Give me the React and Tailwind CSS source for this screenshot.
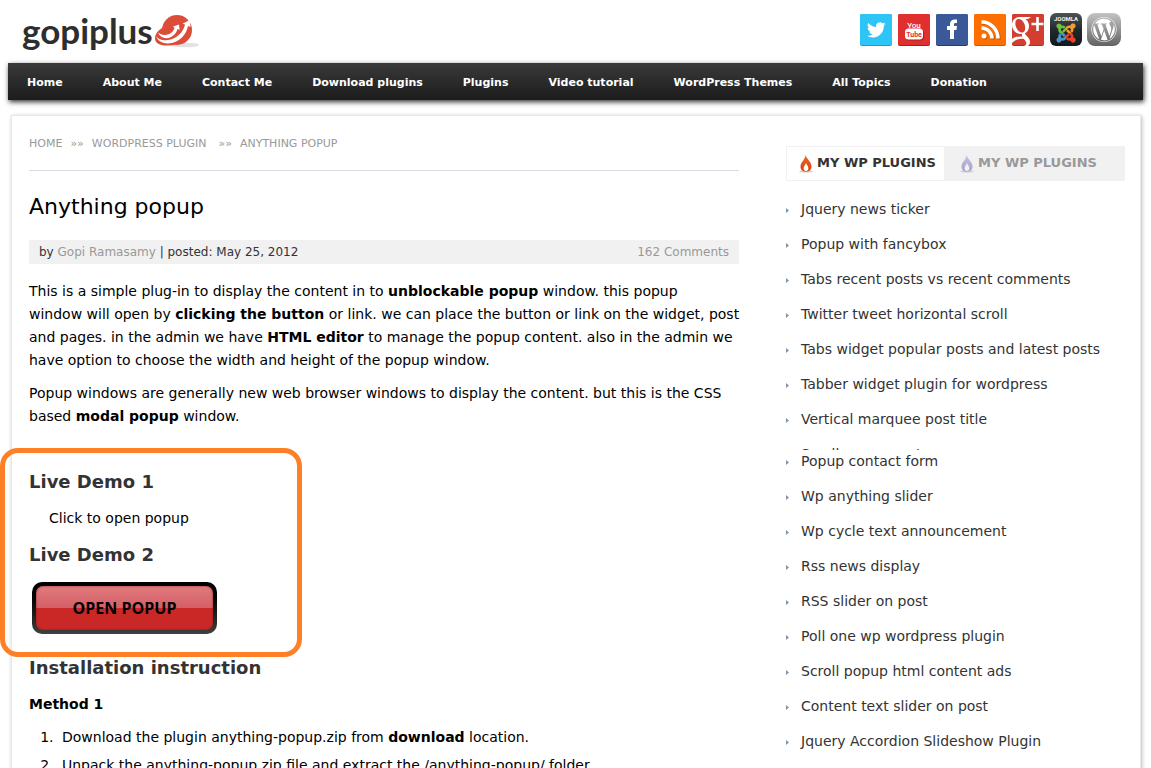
import { FaJoomla, FaWordpress } from "react-icons/fa";

const nav = ["Home", "About Me", "Contact Me", "Download plugins", "Plugins", "Video tutorial", "WordPress Themes", "All Topics", "Donation"];

const pluginsTop = [
  "Jquery news ticker",
  "Popup with fancybox",
  "Tabs recent posts vs recent comments",
  "Twitter tweet horizontal scroll",
  "Tabs widget popular posts and latest posts",
  "Tabber widget plugin for wordpress",
  "Vertical marquee post title",
];

const pluginsBottom = [
  "Popup contact form",
  "Wp anything slider",
  "Wp cycle text announcement",
  "Rss news display",
  "RSS slider on post",
  "Poll one wp wordpress plugin",
  "Scroll popup html content ads",
  "Content text slider on post",
  "Jquery Accordion Slideshow Plugin",
];

function LogoMark() {
  return (
    <svg className="ml-px" width="46" height="38" viewBox="0 0 46 38" aria-hidden="true">
      <ellipse cx="31" cy="33" rx="14" ry="2.3" fill="#e2e2e2" />
      <circle cx="23" cy="18" r="15" fill="#dd4b39" />
      <path d="M8 16C3 19 1 23 1 26.500c0 4.500 5 7 11 7 4 0 8-.5 11-1.500L28 22 14 12Z" fill="#dd4b39" />
      <path d="M4 20.500C6 25.500 11 27.300 16 25.500c4-1.700 6.500-4.500 7.500-8.500l2.200.8-.8-5.300-6.200 2.300 2 .9c-1 3-3 5.300-6.200 6.500C11 23.400 7 23.200 4 20.500Z" fill="#fff" />
      <path d="M2 24C4 30 10.500 32.600 18 31c8-2 14.500-8.500 16-17l2.500.9-.7-6.900-7.300 3.700 2.500.8C29.500 19 24.500 25 17.500 27.300 11 29.300 5 28.500 2 24Z" fill="#fff" />
    </svg>
  );
}

function Social({ label, children }) {
  return (
    <a href="#" aria-label={label} className="block h-[34px] w-[34px]">
      <svg width="34" height="34" viewBox="0 0 34 34">{children}</svg>
    </a>
  );
}

function Tile({ color, edge }) {
  return (
    <>
      <rect x="1" y="2" width="32" height="32" rx="2" fill={edge} />
      <rect x="1" y="2" width="32" height="31" rx="2" fill={color} />
    </>
  );
}

function Flame({ top, bottom, inner, id }) {
  return (
    <svg width="14" height="18" viewBox="0 0 14 18" aria-hidden="true">
      <linearGradient id={id} x1="0" y1="0" x2="0" y2="1"><stop offset="0" stopColor={top} /><stop offset="1" stopColor={bottom} /></linearGradient>
      <ellipse cx="7" cy="16.400" rx="6.800" ry="1.200" fill="#cfcfcf" />
      <path d="M6.500 0C7.500 4 12.500 6.500 12.500 11.500C12.500 14.500 10.500 16.500 7 16.500S1.500 14.500 1.500 11.500C1.500 7 6 5 6.500 0Z" fill={`url(#${id})`} />
      <path d="M7 8C7.500 10 9.400 11 9.400 13.200C9.400 15 8.500 16 7 16S4.600 15 4.600 13.200C4.600 11 6.500 10 7 8Z" fill={inner} />
    </svg>
  );
}

function PluginItem({ name }) {
  return (
    <li className="flex h-[35px] items-center gap-3">
      <svg className="mt-1" width="3" height="5" viewBox="0 0 3 5" aria-hidden="true"><path d="M0 0L3 2.500 0 5Z" fill="#8096a8" /></svg>
      <a href="#" className="whitespace-nowrap">{name}</a>
    </li>
  );
}

export default function App() {
  return (
    <div className="h-screen overflow-hidden bg-white px-2 font-['Verdana','DejaVu_Sans',sans-serif] text-sm text-black">
      <header className="flex h-[63px] items-start justify-between pr-[22px] pl-[14px] pt-3">
        <a href="#" aria-label="gopiplus" className="flex items-start">
          <span className="font-['Lato',sans-serif] text-[35px] leading-9 font-bold text-[#2e2e2e]">gopiplus</span>
          <LogoMark />
        </a>
        <div className="flex gap-1">
          <Social label="Twitter">
            <Tile color="#2cc5f6" edge="#1b9fce" />
            <path transform="translate(8 8.500) scale(.78)" fill="#fff" d="M23.950 4.570a10 10 0 0 1-2.820.770 4.960 4.960 0 0 0 2.160-2.720c-.950.550-2 .950-3.130 1.180a4.920 4.920 0 0 0-8.380 4.480C7.690 8.100 4.070 6.130 1.640 3.160a4.900 4.900 0 0 0 1.520 6.570 4.900 4.900 0 0 1-2.230-.610v.060a4.920 4.920 0 0 0 3.950 4.830 5 5 0 0 1-2.210.080 4.940 4.940 0 0 0 4.600 3.420A9.870 9.870 0 0 1 0 19.540a13.990 13.990 0 0 0 7.550 2.210c9.050 0 14-7.500 14-13.980v-.640a9.900 9.900 0 0 0 2.400-2.560Z" />
          </Social>
          <Social label="YouTube">
            <Tile color="#df302f" edge="#ab1c1c" />
            <rect x="9" y="17.500" width="18" height="11" rx="3.500" fill="#a82020" />
            <text x="17" y="15.500" textAnchor="middle" fontFamily="Roboto, sans-serif" fontWeight="500" fontSize="8" fill="#fff">You</text>
            <rect x="8" y="16.500" width="18" height="11" rx="3.500" fill="#fff" />
            <text x="17" y="25" textAnchor="middle" fontFamily="Roboto, sans-serif" fontWeight="700" fontSize="7" fill="#df302f">Tube</text>
          </Social>
          <Social label="Facebook">
            <Tile color="#3b5998" edge="#263c6d" />
            <path d="M15 27V18h-3v-4h3v-2c0-3 2-4.500 4.500-4.500H22v3.500h-1.500c-1 0-1.500.5-1.500 1.500V14h3l-.5 4H19v9Z" fill="#fff" />
          </Social>
          <Social label="RSS">
            <Tile color="#ff6f00" edge="#d65400" />
            <g transform="translate(1 1)"><circle cx="11" cy="24" r="2.500" fill="#c95500" /><path d="M8.500 16A10.500 10.500 0 0 1 19 26.500M8.500 10A16.500 16.500 0 0 1 25 26.500" fill="none" stroke="#c95500" strokeWidth="3.500" /></g>
            <circle cx="11" cy="24" r="2.500" fill="#fff" />
            <path d="M8.500 16A10.500 10.500 0 0 1 19 26.500M8.500 10A16.500 16.500 0 0 1 25 26.500" fill="none" stroke="#fff" strokeWidth="3.500" />
          </Social>
          <Social label="Google Plus">
            <clipPath id="gp"><rect x="1" y="2" width="32" height="32" rx="2" /></clipPath>
            <Tile color="#d23e30" edge="#b03024" />
            <g clipPath="url(#gp)">
              <path fillRule="evenodd" fill="#fff" d="M9 5C14 5 18 9 18 14S15 22 10 22 1 18 1 13 4 5 9 5ZM8 7C5 7 4 9.500 4.500 13S8 20.500 11 20.500 14.500 17 14 14 11 7 8 7Z" />
              <path d="M9 5h11l-3 2h-5ZM11 21h3c0 3 5 4 5 9 0 2-1 3-2 4h-4c2-1 3-2 2-4-1-3-5-4-4-9Z" fill="#fff" />
              <path d="M1 27c4-3 9-3 14-2l1 2c-6-1-11 0-15 4Z" fill="#fff" />
              <path d="M26.500 5v14M20.500 12h12" stroke="#fff" strokeWidth="2.600" />
            </g>
          </Social>
          <Social label="Joomla">
            <linearGradient id="jb" x1="0" y1="0" x2="0" y2="1"><stop offset="0" stopColor="#4b5356" /><stop offset=".5" stopColor="#20292d" /><stop offset="1" stopColor="#10191d" /></linearGradient>
            <pattern id="jc" width="1" height="1" viewBox="0 0 2 2" preserveAspectRatio="none">
              <rect width="1" height="1" fill="#6cbf3f" /><rect x="1" width="1" height="1" fill="#f59a2c" /><rect y="1" width="1" height="1" fill="#4a92d0" /><rect x="1" y="1" width="1" height="1" fill="#ee4128" />
            </pattern>
            <rect x="1" y="1" width="32" height="33" rx="6" fill="url(#jb)" />
            <text x="17" y="9" textAnchor="middle" fontFamily="Roboto, sans-serif" fontWeight="700" fontSize="6" fill="#f4f4f4">JOOMLA</text>
            <FaJoomla x="6" y="10" size={22} fill="url(#jc)" />
          </Social>
          <Social label="WordPress">
            <linearGradient id="wb" x1="0" y1="0" x2="0" y2="1"><stop offset="0" stopColor="#c4c4c4" /><stop offset="1" stopColor="#626262" /></linearGradient>
            <rect x="0" y="1" width="34" height="33" rx="8" fill="url(#wb)" />
            <FaWordpress x="4" y="4.500" size={26} fill="#fff" />
          </Social>
        </div>
      </header>

      <nav className="flex h-[37px] items-center bg-linear-to-b from-[#3a3a3a] to-[#1c1c1c] pt-0.5 pl-[19px] text-[11px] font-bold text-white shadow-[1px_2px_5px_#333]">
        <ul className="flex gap-10">
          {nav.map((n) => <li key={n}><a href="#" className="whitespace-nowrap">{n}</a></li>)}
        </ul>
      </nav>

      <div className="mr-[2px] ml-[3px] mt-[15px] flex items-start gap-[47px] border border-[#e8e8e8] bg-white pr-[15px] pb-10 pl-[17px] shadow-[1px_1px_4px_#bbb]">
        <main className="min-w-0 flex-1">
          <div className="flex h-[55px] items-center border-b border-[#d8dce5] pt-0.5 text-[11px] text-[#999]">
            <a href="#">HOME</a><span className="mx-2">»»</span><a href="#">WORDPRESS PLUGIN</a><span className="mr-2 ml-3">»»</span><span>ANYTHING POPUP</span>
          </div>
          <h1 className="mt-5 text-[22px] leading-8">Anything popup</h1>
          <div className="mt-[17px] flex h-6 items-center justify-between bg-[#f1f1f1] px-[10px] text-xs text-[#333]">
            <p>by <a href="#" className="text-[#999]">Gopi Ramasamy</a> | posted: May 25, 2012</p>
            <a href="#" className="text-[#999]">162 Comments</a>
          </div>
          <p className="mt-4 -mr-3 leading-[23px]">This is a simple plug-in to display the content in to <b>unblockable popup</b> window. this popup<br />window will open by <b>clicking the button</b> or link. we can place the button or link on the widget, post<br />and pages. in the admin we have <b>HTML editor</b> to manage the popup content. also in the admin we<br />have option to choose the width and height of the popup window.</p>
          <p className="mt-[10px] leading-[23px]">Popup windows are generally new web browser windows to display the content. but this is the CSS based <b>modal popup</b> window.</p>

          <section className="relative mt-10 pt-px">
            <div className="pointer-events-none absolute -top-5 -bottom-[23px] -left-[29px] w-[302px] rounded-[18px] border-[5px] border-[#ff7f27]" />
            <h2 className="text-lg leading-[26px] font-bold text-[#333]">Live Demo 1</h2>
            <a href="#" className="mt-3 ml-5 block leading-[23px]">Click to open popup</a>
            <h2 className="mt-3 text-lg leading-[26px] font-bold text-[#333]">Live Demo 2</h2>
            <button type="button" className="mt-[14px] ml-[3px] flex h-[52px] w-[185px] rounded-[10px] bg-linear-to-b from-black to-[#414141] p-1">
              <span className="flex h-full w-full items-center justify-center rounded-[7px] bg-[linear-gradient(#e07b7f,#d55f65_50%,#ca2826_50%,#ca2826)] font-['Open_Sans',sans-serif] text-base font-bold text-black shadow-[inset_0_0_2px_#7a1a1a]">OPEN POPUP</span>
            </button>
          </section>

          <h2 className="mt-[21px] text-lg leading-[26px] font-bold text-[#333]">Installation instruction</h2>
          <h3 className="mt-3 leading-[23px] font-bold">Method 1</h3>
          <ol className="mt-[7px] list-decimal pl-[29px] leading-7">
            <li className="pl-1">Download the plugin anything-popup.zip from <b>download</b> location.</li>
            <li className="pl-1">Unpack the anything-popup.zip file and extract the /anything-popup/ folder.</li>
          </ol>
        </main>

        <aside className="mt-[30px] w-[339px] shrink-0 text-[#333]">
          <div className="flex h-[35px] bg-[#f1f1f1] text-[13px] font-bold">
            <button type="button" className="flex w-[159px] items-center gap-1 border border-[#f1f1f1] bg-white pl-3">
              <Flame id="f1" top="#f26a2a" bottom="#d63f06" inner="#fff" />
              <span className="whitespace-nowrap">MY WP PLUGINS</span>
            </button>
            <button type="button" className="flex flex-1 items-center gap-1 pl-[15px] text-[#999]">
              <Flame id="f2" top="#c9c4e2" bottom="#a39fca" inner="#f1f1f1" />
              <span className="whitespace-nowrap">MY WP PLUGINS</span>
            </button>
          </div>
          <ul className="mt-[10px]">
            {pluginsTop.map((p) => <PluginItem key={p} name={p} />)}
          </ul>
          <ul className="h-[14px] overflow-hidden"><PluginItem name="Scroll rss excerpt" /></ul>
          <ul className="-mt-[7px]">
            {pluginsBottom.map((p) => <PluginItem key={p} name={p} />)}
          </ul>
        </aside>
      </div>
    </div>
  );
}
